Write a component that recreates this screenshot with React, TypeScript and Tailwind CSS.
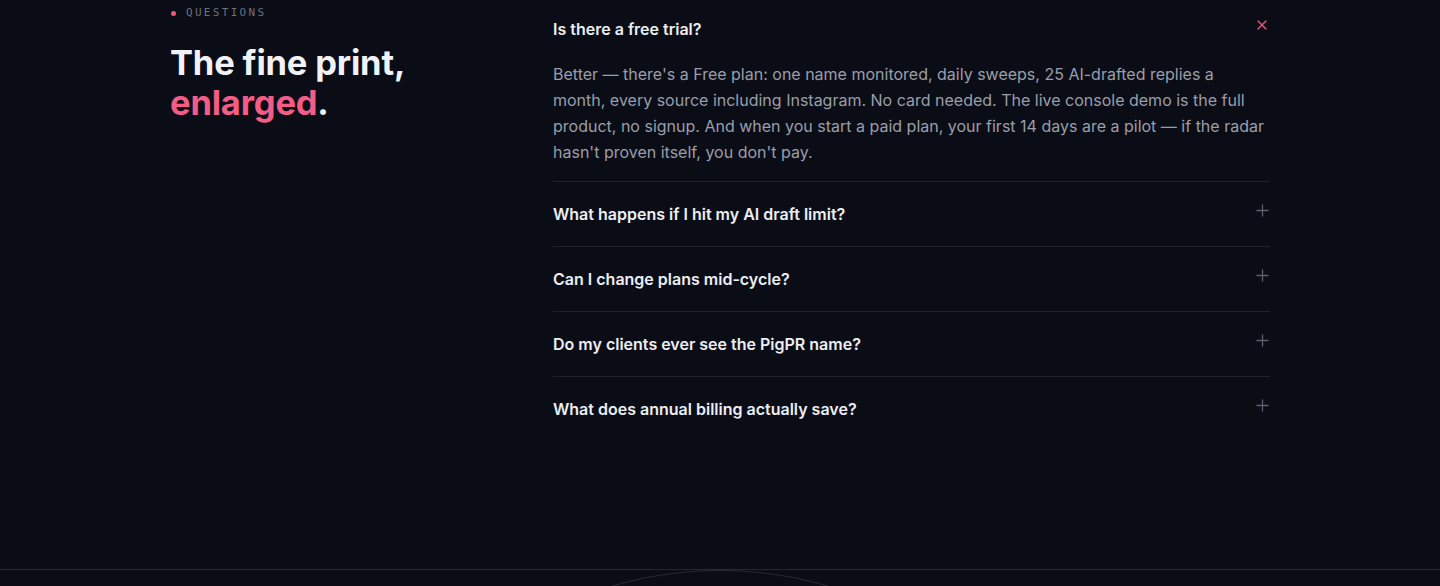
import { Plus, X } from "lucide-react"

const faqs = [
  {
    q: "Is there a free trial?",
    a: "Better — there's a Free plan: one name monitored, daily sweeps, 25 AI-drafted replies a month, every source including Instagram. No card needed. The live console demo is the full product, no signup. And when you start a paid plan, your first 14 days are a pilot — if the radar hasn't proven itself, you don't pay.",
  },
  { q: "What happens if I hit my AI draft limit?" },
  { q: "Can I change plans mid-cycle?" },
  { q: "Do my clients ever see the PigPR name?" },
  { q: "What does annual billing actually save?" },
]

export default function App() {
  return (
    <div className="min-h-screen bg-[#0a0d15] text-[#e8eaf0] overflow-hidden" style={{ fontFamily: "Inter, 'Noto Sans', sans-serif" }}>
      <section className="h-[569px]">
        <div className="mx-auto w-[1100px] grid grid-cols-[383px_1fr]">
          <div className="pt-[5px]">
            <div className="flex items-center gap-[10px] h-4 pl-[1px]">
              <span className="w-[5px] h-[5px] rounded-full bg-[#f2557f]" />
              <span className="text-[11px] tracking-[0.21em] text-[#6b7080]" style={{ fontFamily: "'DejaVu Sans Mono', 'Liberation Mono', monospace" }}>
                QUESTIONS
              </span>
            </div>
            <h2 className="mt-[22px] text-[34.5px] leading-[40px] font-bold tracking-[-0.005em] text-[#f1f2f6]">
              The fine print,
              <br />
              <span className="text-[#f25c86]">enlarged</span>.
            </h2>
          </div>

          <div>
            {faqs.map((f, i) => (
              <div key={f.q} className={i < faqs.length - 1 ? "border-b border-[#1f2330]" : ""}>
                <div className={`flex items-start justify-between ${i === 0 ? "pt-[17px]" : "pt-5"} pb-5`}>
                  <span className="text-base leading-6 font-semibold text-[#eceef3]">{f.q}</span>
                  {f.a ? (
                    <X className="w-4 h-4 text-[#e8557c]" strokeWidth={2} />
                  ) : (
                    <Plus className="-mt-px -mr-[2px] w-[19px] h-[19px] text-[#5b606e]" strokeWidth={1.6} />
                  )}
                </div>
                {f.a && (
                  <p className="pb-4 pr-1 text-base leading-[26px] text-[#9a9eab]">{f.a}</p>
                )}
              </div>
            ))}
          </div>
        </div>
      </section>

      <section className="relative h-[17px] border-t border-[#262a35] overflow-hidden">
        <div className="absolute left-1/2 top-0 -translate-x-1/2 w-[768px] h-[768px] rounded-full border border-[#2a2736]" />
      </section>
    </div>
  )
}
